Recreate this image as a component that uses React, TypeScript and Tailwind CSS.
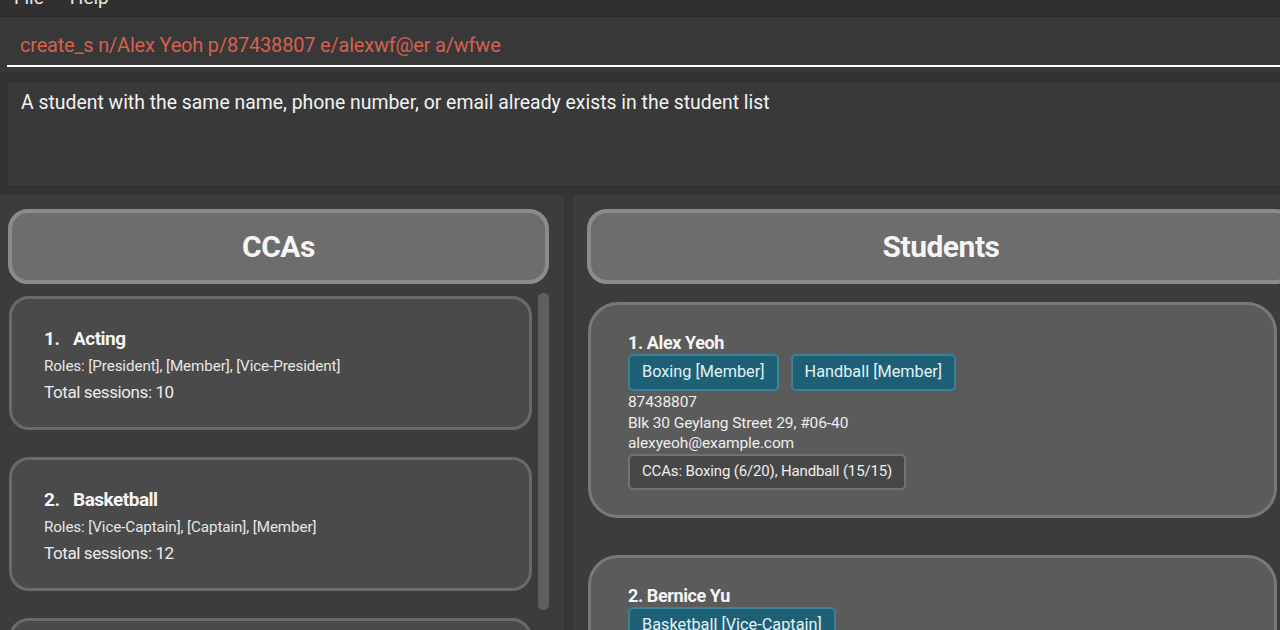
const CCAS = [
  { name: 'Acting', roles: '[President], [Member], [Vice-President]', sessions: 10 },
  { name: 'Basketball', roles: '[Vice-Captain], [Captain], [Member]', sessions: 12 },
  { name: 'Boxing', roles: '[Member]', sessions: 20 },
];

const STUDENTS = [
  {
    name: 'Alex Yeoh',
    tags: ['Boxing [Member]', 'Handball [Member]'],
    phone: '87438807',
    address: 'Blk 30 Geylang Street 29, #06-40',
    email: 'alexyeoh@example.com',
    ccas: 'CCAs: Boxing (6/20), Handball (15/15)',
  },
  {
    name: 'Bernice Yu',
    tags: ['Basketball [Vice-Captain]'],
    phone: '99272758',
    address: 'Blk 30 Lorong 3 Serangoon Gardens, #07-18',
    email: 'berniceyu@example.com',
    ccas: 'CCAs: Basketball (3/12)',
  },
];

const App = () => {
  return (
    <div className="w-[1280px] h-[630px] overflow-hidden bg-[#383838] text-white font-['Roboto','Liberation_Sans',sans-serif] flex flex-col">
      <div className="h-[17px] shrink-0 bg-[#303030] border-b border-[#272727] overflow-hidden">
        <div className="flex gap-[26px] pl-[14px] -mt-[12px] text-[19px] leading-[19px] text-[#e8e8e8]">
          <span>File</span>
          <span>Help</span>
        </div>
      </div>

      {/* command box */}
      <div className="h-[55px] shrink-0 bg-[#383838] pl-[7px] flex flex-col">
        <div className="flex-1 flex items-center pl-[13px] pt-[8px] text-[20px] text-[#d4614e] tracking-[-0.2px]">
          create_s n/Alex Yeoh p/87438807 e/alexwf@er a/wfwe
        </div>
        <div className="h-[2px] bg-white mb-[5px]" />
      </div>

      {/* result display */}
      <div className="shrink-0 bg-[#333333] pt-[8px] pb-[8px] pl-[6px] border-t border-[#2e2e2e]">
        <div className="h-[106px] bg-[#393939] border border-[#2c2c2c] border-r-0 px-[14px] pt-[6px] text-[19.4px] text-[#f2f2f2]">
          A student with the same name, phone number, or email already exists in the student list
        </div>
      </div>

      {/* main split */}
      <div className="flex-1 flex min-h-0">
        {/* CCA panel */}
        <div className="w-[562px] shrink-0 bg-[#3a3c3d] flex flex-col pt-[14px] pl-[8px] pr-[13px] overflow-hidden">
          <div className="h-[75px] shrink-0 rounded-[20px] border-[4px] border-[#8b8b8b] bg-[#6d6d6d] flex items-center justify-center">
            <span className="text-[30px] font-bold tracking-[-0.5px] text-[#f5f5f5]">CCAs</span>
          </div>
          <div className="flex flex-1 gap-[6px] pt-[6px] min-h-0">
            <div className="flex-1 flex flex-col gap-[27px] pt-[6px]">
              {CCAS.map((c, i) => (
                <div
                  key={c.name}
                  className="h-[134px] shrink-0 ml-[1px] rounded-[20px] border-[3px] border-[#6a6a6a] bg-[#4a4a4a] pl-[32px] pt-[28px]"
                >
                  <div className="flex text-[19px] font-bold leading-[24px] tracking-[-0.5px] text-[#f5f5f5]">
                    <span className="w-[29px]">{i + 1}.</span>
                    <span>{c.name}</span>
                  </div>
                  <div className="text-[15.2px] leading-[20px] mt-[5px] text-[#e6e6e6] tracking-[-0.1px]">
                    Roles: {c.roles}
                  </div>
                  <div className="text-[17px] leading-[22px] mt-[5px] text-[#ececec] tracking-[-0.4px]">
                    Total sessions: {c.sessions}
                  </div>
                </div>
              ))}
            </div>
            <div className="w-[11px] shrink-0 flex flex-col">
              <div className="h-[317px] mt-[3px] rounded-[5px] bg-[#5f5f5f]" />
            </div>
          </div>
        </div>

        {/* splitter */}
        <div className="w-[13px] shrink-0 bg-[#363636] border-l border-[#444444] border-r border-[#303030]" />

        {/* Student panel */}
        <div className="flex-1 bg-[#3a3c3d] pt-[14px] pl-[12px] overflow-hidden">
          <div className="w-[708px] h-[75px] shrink-0 rounded-[20px] border-[4px] border-[#8b8b8b] bg-[#6d6d6d] flex items-center justify-center">
            <span className="text-[30px] font-bold tracking-[-0.5px] text-[#f5f5f5]">Students</span>
          </div>
          <div className="flex flex-col gap-[37px] pt-[18px] pr-[3px]">
            {STUDENTS.map((s, i) => (
              <div
                key={s.name}
                className="shrink-0 ml-[1px] rounded-[30px] border-[3px] border-[#787878] bg-[#5b5b5b] pl-[37px] pt-[26px] pb-[25px]"
              >
                <div className="text-[18px] font-bold leading-[24px] tracking-[-0.4px] text-[#f5f5f5]">
                  {i + 1}. {s.name}
                </div>
                <div className="flex gap-[12px] -mt-[1px]">
                  {s.tags.map((t) => (
                    <span
                      key={t}
                      className="h-[37px] px-[12px] flex items-center rounded-[5px] border-[2px] border-[#3c8294] bg-[#1d6075] text-[16.3px] text-[#e2f2f5]"
                    >
                      {t}
                    </span>
                  ))}
                </div>
                <div className="text-[15.5px] leading-[20.5px] mt-[1px] text-[#eeeeee] tracking-[-0.1px]">
                  <div>{s.phone}</div>
                  <div>{s.address}</div>
                  <div>{s.email}</div>
                </div>
                <div className="inline-flex h-[36px] items-center px-[12px] rounded-[5px] border-[2px] border-[#727272] bg-[#474747] text-[15px] text-[#eeeeee] tracking-[-0.15px]">
                  {s.ccas}
                </div>
              </div>
            ))}
          </div>
        </div>
      </div>
    </div>
  );
};

export default App;
